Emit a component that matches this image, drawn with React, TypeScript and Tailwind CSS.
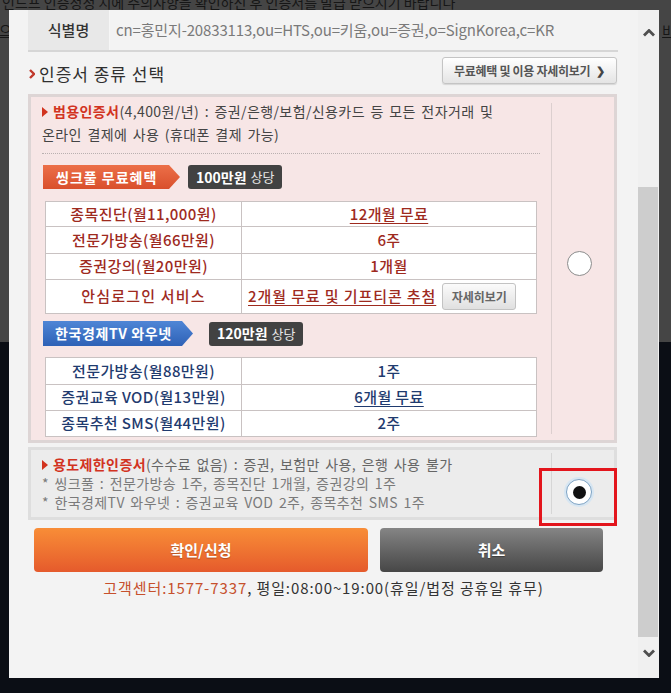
import React from "react";

const KR = "font-['Noto_Sans_CJK_KR','Noto_Sans',sans-serif]";

const thinkpoolRows = [
  { label: "종목진단(월11,000원)", value: "12개월 무료", link: true, h: "h-[25px]" },
  { label: "전문가방송(월66만원)", value: "6주", link: false, h: "h-[27px]" },
  { label: "증권강의(월20만원)", value: "1개월", link: false, h: "h-[26px]" },
];

const wownetRows = [
  { label: "전문가방송(월88만원)", value: "1주", link: false, h: "h-[27px]" },
  { label: "증권교육 VOD(월13만원)", value: "6개월 무료", link: true, h: "h-[26px]" },
  { label: "종목추천 SMS(월44만원)", value: "2주", link: false, h: "h-[26px]" },
];

const RedTriangle = () => (
  <svg viewBox="0 0 6 10" className="inline-block w-[6px] h-[10px] mr-[5px] mb-[2px]">
    <path d="M0 0 L6 5 L0 10 Z" fill="#d2331f" />
  </svg>
);

const Radio = ({ checked }: { checked?: boolean }) =>
  checked ? (
    <div className="w-[26px] h-[26px] rounded-full bg-white border border-[#7ea3c4] shadow-[0_0_0_2px_#d7e6f2] flex items-center justify-center">
      <div className="w-[13px] h-[13px] rounded-full bg-[#111]" />
    </div>
  ) : (
    <div className="w-[25px] h-[25px] rounded-full bg-white border border-[#8c8c8c]" />
  );

const Chevron = ({ down }: { down?: boolean }) => (
  <svg viewBox="0 0 12 8" className="w-[12px] h-[8px]">
    <path
      d={down ? "M1 1.5 L6 6.5 L11 1.5" : "M1 6.5 L6 1.5 L11 6.5"}
      fill="none"
      stroke="#4f4f4f"
      strokeWidth="2.8"
    />
  </svg>
);

const PriceTag = ({ amount, left }: { amount: string; left: string }) => (
  <div
    className={`${left} h-[24px] px-[8px] rounded-[3px] bg-[#424242] flex items-center gap-[4px] text-white`}
  >
    <span className="text-[14px] font-bold">{amount}</span>
    <span className="text-[13px] text-[#e6e6e6]">상당</span>
  </div>
);

const App = () => {
  return (
    <div className={`relative w-[671px] h-[693px] overflow-hidden bg-[#0b0e15] ${KR}`}>
      {/* page behind the overlay */}
      <div className="h-[350px] bg-[#454545] text-[#161616] text-[14px]">
        <div className="-mt-[8px] pl-[2px] whitespace-nowrap">
          인드프 인증정정 시에 주의사항을 확인하신 후 인증서를 발급 받으시기 바랍니다
        </div>
        <div className="mt-[7px] flex justify-between whitespace-nowrap underline">
          <span className="-ml-[1px]">으</span>
          <span className="-mr-[4px]">비</span>
        </div>
      </div>

      {/* modal */}
      <div className="absolute left-[9px] top-[10px] w-[650px] h-[668px] bg-[#f3f3f3] flex">
        <div className="w-[629px] flex flex-col">
          {/* identifier */}
          <div className="ml-[19px] w-[590px] h-[42px] flex border-b-2 border-[#d6d6d6]">
            <div className="w-[82px] bg-[#e8e8e8] border-r border-[#f6f6f6] flex items-center justify-center text-[15px] font-medium text-[#333]">
              식별명
            </div>
            <div className="pl-[6px] flex items-center text-[15px] text-[#7a7a7a] tracking-[-0.15px] whitespace-nowrap">
              cn=홍민지-20833113,ou=HTS,ou=키움,ou=증권,o=SignKorea,c=KR
            </div>
          </div>

          {/* section title */}
          <div className="mt-[5px] ml-[20px] w-[588px] h-[27px] flex items-center justify-between">
            <div className="flex items-center pt-[6px]">
              <svg viewBox="0 0 6 10" className="w-[6px] h-[10px] mr-[4px]">
                <path d="M1 1 L5 5 L1 9" fill="none" stroke="#c0392b" strokeWidth="2.4" />
              </svg>
              <span className="text-[17px] text-[#2f2f2f] tracking-[1px]">인증서 종류 선택</span>
            </div>
            <button className="w-[175px] h-[27px] rounded-[3px] border border-[#c4c4c4] bg-gradient-to-b from-white to-[#e4e4e4] shadow-[0_1px_1px_rgba(0,0,0,0.12)] text-[12px] font-bold text-[#555] tracking-[-0.3px] flex items-center justify-center gap-[6px]">
              무료혜택 및 이용 자세히보기
              <span className="text-[11px] text-[#444]">❯</span>
            </button>
          </div>

          {/* general certificate */}
          <div className="mt-[10px] ml-[19px] w-[589px] border-[3px] border-[#ddd5d5] bg-[#f7e6e6] flex">
            <div className="w-[520px] px-[11px] pt-[3px] pb-[3px]">
              <div className="text-[14px] leading-[23px] text-[#444] tracking-[0.4px] [word-spacing:2px] whitespace-nowrap">
                <RedTriangle />
                <span className="font-bold text-[#d2331f]">범용인증서</span>(4,400원/년) : 증권/은행/보험/신용카드 등 모든 전자거래 및
                <br />
                온라인 결제에 사용 (휴대폰 결제 가능)
              </div>
              <div className="mt-[7px] border-t border-dotted border-[#b9b0b0]" />

              <div className="mt-[11px] ml-[1px] flex items-center">
                <div className="w-[137px] h-[24px] pl-[13px] bg-gradient-to-b from-[#ec6f48] to-[#d94f2c] [clip-path:polygon(0_0,calc(100%-11px)_0,100%_50%,calc(100%-11px)_100%,0_100%)] flex items-center text-[14px] font-bold text-white tracking-[1px]">
                  씽크풀 무료혜택
                </div>
                <PriceTag amount="100만원" left="ml-[8px]" />
              </div>

              <table className="mt-[12px] ml-[3px] w-[492px] border-collapse bg-white text-[15px] font-medium text-[#9e2a1e] tracking-[0.4px]">
                <tbody>
                  {thinkpoolRows.map((r) => (
                    <tr key={r.label} className={r.h}>
                      <td className="w-[196px] border border-[#c9c2c2] text-center p-0">{r.label}</td>
                      <td className="border border-[#c9c2c2] text-center p-0">
                        <span className={r.link ? "underline underline-offset-[3px]" : ""}>{r.value}</span>
                      </td>
                    </tr>
                  ))}
                  <tr className="h-[34px]">
                    <td className="w-[196px] border border-[#c9c2c2] text-center p-0 tracking-[1.2px]">안심로그인 서비스</td>
                    <td className="border border-[#c9c2c2] p-0">
                      <div className="flex items-center pl-[6px] gap-[6px]">
                        <span className="underline underline-offset-[3px] tracking-[0.9px]">2개월 무료 및 기프티콘 추첨</span>
                        <button className="w-[74px] h-[27px] rounded-[3px] border border-[#c3c3c3] bg-gradient-to-b from-[#fbfbfb] to-[#e0e0e0] text-[12px] font-bold text-[#666] tracking-normal">
                          자세히보기
                        </button>
                      </div>
                    </td>
                  </tr>
                </tbody>
              </table>

              <div className="mt-[7px] ml-[1px] flex items-center">
                <div className="w-[150px] h-[25px] pl-[12px] bg-gradient-to-b from-[#4f86d6] to-[#2e61b6] [clip-path:polygon(0_0,calc(100%-11px)_0,100%_50%,calc(100%-11px)_100%,0_100%)] flex items-center text-[14px] font-bold text-white tracking-[0.6px]">
                  한국경제TV 와우넷
                </div>
                <PriceTag amount="120만원" left="ml-[16px]" />
              </div>

              <table className="mt-[11px] ml-[3px] w-[492px] border-collapse bg-white text-[15px] font-medium text-[#1f3b6f] tracking-[0.4px]">
                <tbody>
                  {wownetRows.map((r) => (
                    <tr key={r.label} className={r.h}>
                      <td className="w-[196px] border border-[#c9c2c2] text-center p-0">{r.label}</td>
                      <td className="border border-[#c9c2c2] text-center p-0">
                        <span className={r.link ? "underline underline-offset-[3px]" : ""}>{r.value}</span>
                      </td>
                    </tr>
                  ))}
                </tbody>
              </table>
            </div>
            <div className="flex-1 my-[6px] border-l border-[#dccfcf] flex items-center justify-center pr-[8px] pb-[10px]">
              <Radio />
            </div>
          </div>

          {/* restricted certificate */}
          <div className="relative mt-[4px] ml-[19px] w-[589px] border-[3px] border-[#dedede] bg-[#ececec] flex">
            <div className="w-[520px] pl-[11px] pt-[5px] pb-[5px] text-[14px] leading-[19px] text-[#7a7a7a] tracking-[0.4px] [word-spacing:2px] whitespace-nowrap">
              <div className="text-[#666]">
                <RedTriangle />
                <span className="font-bold text-[#d2331f]">용도제한인증서</span>(수수료 없음) : 증권, 보험만 사용, 은행 사용 불가
              </div>
              <div>* 씽크풀 : 전문가방송 1주, 종목진단 1개월, 증권강의 1주</div>
              <div>* 한국경제TV 와우넷 : 증권교육 VOD 2주, 종목추천 SMS 1주</div>
            </div>
            <div className="flex-1 my-[3px] border-l border-[#d6d6d6] flex justify-center pr-[8px] pt-[26px]">
              <Radio checked />
            </div>
            <div className="absolute left-[508px] top-[18px] w-[78px] h-[58px] border-[3px] border-[#e3151c]" />
          </div>

          {/* actions */}
          <div className="mt-[8px] ml-[25px] flex gap-[12px]">
            <button className="w-[334px] h-[44px] rounded-[4px] bg-gradient-to-b from-[#f88d37] to-[#e55a2c] text-[15px] font-bold text-white [text-shadow:0_1px_1px_rgba(0,0,0,0.25)]">
              확인/신청
            </button>
            <button className="w-[223px] h-[44px] rounded-[4px] bg-gradient-to-b from-[#858585] to-[#474747] text-[15px] font-bold text-white [text-shadow:0_1px_1px_rgba(0,0,0,0.35)]">
              취소
            </button>
          </div>

          <div className="mt-[6px] text-center text-[15px] leading-[20px] text-[#333] tracking-[0.9px]">
            <span className="text-[#c6502c]">고객센터:1577-7337</span>, 평일:08:00~19:00(휴일/법정 공휴일 휴무)
          </div>
        </div>

        {/* scrollbar */}
        <div className="w-[21px] bg-[#f0f0f0] flex flex-col">
          <div className="h-[46px] flex items-center justify-center">
            <Chevron />
          </div>
          <div className="pt-[131px] pr-[1px]">
            <div className="h-[450px] bg-[#cdcdcd]" />
          </div>
          <div className="flex-1 flex justify-center pt-[12px]">
            <Chevron down />
          </div>
        </div>
      </div>
    </div>
  );
};

export default App;
